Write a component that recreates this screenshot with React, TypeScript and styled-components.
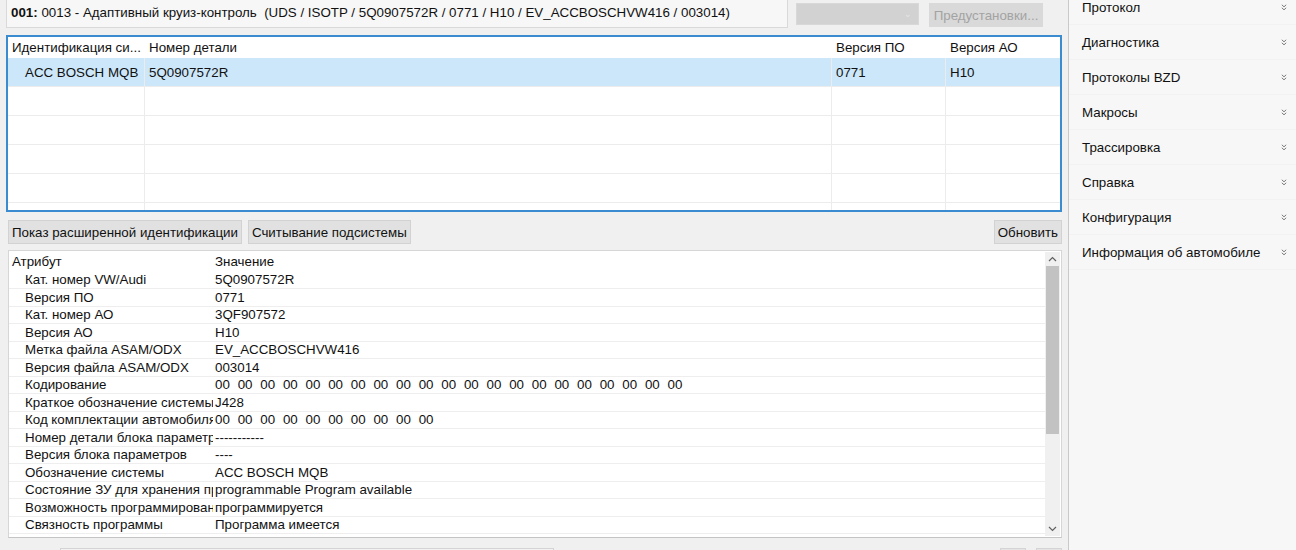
import React from 'react';
import styled, { createGlobalStyle } from 'styled-components';

const GlobalStyle = createGlobalStyle`
  html, body {
    margin: 0;
    padding: 0;
    background: #f0f0f0;
    font-family: 'Liberation Sans', Arial, sans-serif;
    font-size: 13.33px;
    color: #111;
  }
  * {
    box-sizing: border-box;
  }
`;

const Window = styled.div`
  display: flex;
  width: 1296px;
  height: 550px;
  overflow: hidden;
  background: #f0f0f0;
`;

const Main = styled.div`
  width: 1068px;
  display: flex;
  flex-direction: column;
  padding: 0 6px;
  & > * {
    flex-shrink: 0;
  }
`;

const TopBar = styled.div`
  display: flex;
  align-items: flex-start;
  height: 35px;
`;

const TitleField = styled.div`
  width: 782px;
  height: 32px;
  margin-top: -4px;
  display: flex;
  align-items: center;
  padding: 0 4px;
  background: #f7f7f7;
  border: 1px solid #d9d9d9;
  white-space: pre;
  overflow: hidden;
`;

const Combo = styled.div`
  width: 123px;
  height: 22px;
  margin: 3px 0 0 8px;
  background: #d2d2d2;
  border: 1px solid #d8d8d8;
  display: flex;
  align-items: center;
  justify-content: flex-end;
  padding-right: 6px;
  color: #e6e6e6;
  font-size: 9px;
`;

const WinButton = styled.button<{ $disabled?: boolean }>`
  height: 24px;
  padding: 0 3px;
  font-family: inherit;
  font-size: 13.33px;
  color: ${({ $disabled }) => ($disabled ? '#a3a3a3' : '#111')};
  background: ${({ $disabled }) => ($disabled ? '#d9d9d9' : '#e1e1e1')};
  border: 1px solid ${({ $disabled }) => ($disabled ? '#d9d9d9' : '#d2d2d2')};
  border-radius: 0;
  white-space: nowrap;
`;

const PresetButton = styled(WinButton)`
  width: 114px;
  margin: 3px 0 0 10px;
`;

const Grid = styled.div`
  width: 1056px;
  height: 177px;
  border: 2px solid #3b8bd0;
  background: #fff;
  overflow: hidden;
`;

const GridRow = styled.div<{ $header?: boolean; $selected?: boolean }>`
  display: grid;
  grid-template-columns: 137px 687px 114px 1fr;
  height: ${({ $header }) => ($header ? '21px' : '29px')};
  background: ${({ $selected }) => ($selected ? '#cce7fa' : '#fff')};
  border-bottom: ${({ $header }) => ($header ? 'none' : '1px solid #ececec')};
`;

const GridCell = styled.div<{ $header?: boolean; $indent?: boolean; $last?: boolean }>`
  display: flex;
  align-items: center;
  padding-left: ${({ $indent }) => ($indent ? '17px' : '4px')};
  border-right: ${({ $header, $last }) => ($header || $last ? 'none' : '1px solid #ececec')};
  white-space: nowrap;
  overflow: hidden;
`;

const ButtonRow = styled.div`
  display: flex;
  gap: 6px;
  margin: 8px 0 6px 2px;
`;

const Spacer = styled.div`
  flex: 1;
`;

const AttrList = styled.div`
  margin-left: 2px;
  width: 1054px;
  height: 288px;
  display: flex;
  background: #fff;
  border: 1px solid #d6d6d6;
  border-bottom-color: #c4c4c4;
`;

const AttrBody = styled.div`
  flex: 1;
  overflow: hidden;
`;

const AttrRow = styled.div<{ $header?: boolean }>`
  display: grid;
  grid-template-columns: 206px 1fr;
  height: ${({ $header }) => ($header ? '20.5px' : '17.5px')};
  align-items: center;
  padding-top: ${({ $header }) => ($header ? '1px' : '0')};
  border-bottom: ${({ $header }) => ($header ? 'none' : '1px solid #eeeeee')};
`;

const AttrName = styled.div<{ $indent?: boolean }>`
  padding-left: ${({ $indent }) => ($indent ? '16px' : '3px')};
  margin-right: 2px;
  white-space: nowrap;
  overflow: hidden;
`;

const AttrValue = styled.div<{ $hex?: boolean }>`
  white-space: nowrap;
  overflow: hidden;
  word-spacing: ${({ $hex }) => ($hex ? '4.1px' : 'normal')};
`;

const ScrollBar = styled.div`
  width: 15px;
  margin: 1px 1px 1px 0;
  display: flex;
  flex-direction: column;
  align-items: center;
  background: #f0f0f0;
`;

const ScrollArrow = styled.div`
  height: 14px;
  display: flex;
  align-items: center;
  justify-content: center;
`;

const ScrollThumb = styled.div`
  width: 13px;
  height: 168px;
  background: #c2c2c2;
`;

const BottomRow = styled.div`
  display: flex;
  margin-top: 10px;
  padding-left: 54px;
  gap: 10px;
`;

const BottomField = styled.div`
  width: 494px;
  height: 20px;
  border: 1px solid #d4d4d4;
  background: #f2f2f2;
`;

const BottomButton = styled.div`
  width: 26px;
  height: 20px;
  border: 1px solid #d4d4d4;
  background: #e4e4e4;
`;

const Sidebar = styled.div`
  width: 228px;
  border-left: 1px solid #c9c9c9;
  background: #f7f7f7;
  display: flex;
  flex-direction: column;
  margin-top: -10px;
`;

const SideItem = styled.div`
  height: 35px;
  flex-shrink: 0;
  display: flex;
  align-items: center;
  justify-content: space-between;
  padding: 0 9px 0 13px;
  border-bottom: 1px solid #f2f2f2;
  color: #111;
`;

const Chevron = () => (
  <svg width="6" height="7" viewBox="0 0 6 7">
    <path d="M0.8 0.8 L3 2.8 L5.2 0.8 M0.8 3.8 L3 5.8 L5.2 3.8" fill="none" stroke="#7a7a7a" strokeWidth="1" />
  </svg>
);

const Caret = ({ up }: { up?: boolean }) => (
  <svg width="9" height="6" viewBox="0 0 9 6">
    <path d={up ? 'M1 5 L4.5 1.5 L8 5' : 'M1 1 L4.5 4.5 L8 1'} fill="none" stroke="#606060" strokeWidth="1.2" />
  </svg>
);

const hex = (n: number) => Array(n).fill('00').join(' ');

const attributes: [string, string, boolean?][] = [
  ['Кат. номер VW/Audi', '5Q0907572R'],
  ['Версия ПО', '0771'],
  ['Кат. номер АО', '3QF907572'],
  ['Версия АО', 'H10'],
  ['Метка файла ASAM/ODX', 'EV_ACCBOSCHVW416'],
  ['Версия файла ASAM/ODX', '003014'],
  ['Кодирование', hex(21), true],
  ['Краткое обозначение системы', 'J428'],
  ['Код комплектации автомобиля', hex(10), true],
  ['Номер детали блока параметров', '-----------'],
  ['Версия блока параметров', '----'],
  ['Обозначение системы', 'ACC BOSCH MQB'],
  ['Состояние ЗУ для хранения программы', 'programmable Program available'],
  ['Возможность программирования', 'программируется'],
  ['Связность программы', 'Программа имеется'],
];

const menu = [
  'Протокол',
  'Диагностика',
  'Протоколы BZD',
  'Макросы',
  'Трассировка',
  'Справка',
  'Конфигурация',
  'Информация об автомобиле',
];

export default function App() {
  return (
    <>
      <GlobalStyle />
      <Window>
        <Main>
          <TopBar>
            <TitleField>
              <b>001:</b> 0013 - Адаптивный круиз-контроль  (UDS / ISOTP / 5Q0907572R / 0771 / H10 / EV_ACCBOSCHVW416 / 003014)
            </TitleField>
            <Combo>⌄</Combo>
            <PresetButton $disabled>Предустановки...</PresetButton>
          </TopBar>

          <Grid>
            <GridRow $header>
              <GridCell $header>Идентификация си...</GridCell>
              <GridCell $header>Номер детали</GridCell>
              <GridCell $header>Версия ПО</GridCell>
              <GridCell $header>Версия АО</GridCell>
            </GridRow>
            <GridRow $selected>
              <GridCell $indent>ACC BOSCH MQB</GridCell>
              <GridCell>5Q0907572R</GridCell>
              <GridCell>0771</GridCell>
              <GridCell $last>H10</GridCell>
            </GridRow>
            {[0, 1, 2, 3, 4].map((i) => (
              <GridRow key={i}>
                <GridCell />
                <GridCell />
                <GridCell />
                <GridCell $last />
              </GridRow>
            ))}
          </Grid>

          <ButtonRow>
            <WinButton>Показ расширенной идентификации</WinButton>
            <WinButton>Считывание подсистемы</WinButton>
            <Spacer />
            <WinButton>Обновить</WinButton>
          </ButtonRow>

          <AttrList>
            <AttrBody>
              <AttrRow $header>
                <AttrName>Атрибут</AttrName>
                <AttrValue>Значение</AttrValue>
              </AttrRow>
              {attributes.map(([name, value, isHex]) => (
                <AttrRow key={name}>
                  <AttrName $indent>{name}</AttrName>
                  <AttrValue $hex={isHex}>{value}</AttrValue>
                </AttrRow>
              ))}
            </AttrBody>
            <ScrollBar>
              <ScrollArrow>
                <Caret up />
              </ScrollArrow>
              <ScrollThumb />
              <Spacer />
              <ScrollArrow>
                <Caret />
              </ScrollArrow>
            </ScrollBar>
          </AttrList>

          <BottomRow>
            <BottomField />
            <Spacer />
            <BottomButton />
            <BottomButton />
          </BottomRow>
        </Main>

        <Sidebar>
          {menu.map((item) => (
            <SideItem key={item}>
              <span>{item}</span>
              <Chevron />
            </SideItem>
          ))}
        </Sidebar>
      </Window>
    </>
  );
}
